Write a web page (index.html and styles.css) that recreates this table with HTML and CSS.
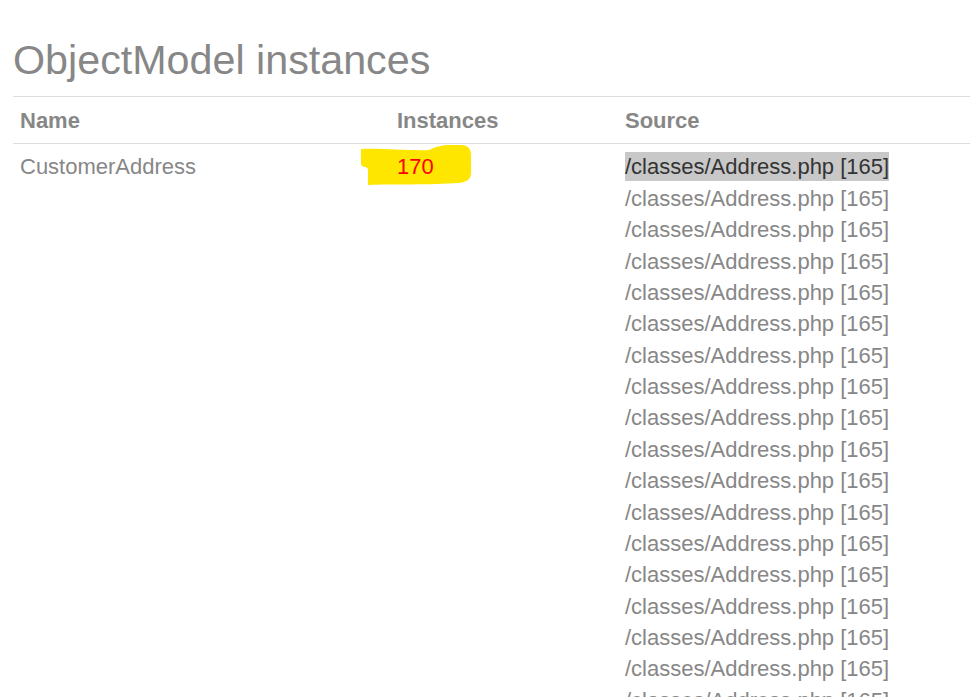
FILE: index.html
```html
<!DOCTYPE html>
<html lang="en">
<head>
<meta charset="utf-8">
<title>ObjectModel instances</title>
<link rel="stylesheet" href="styles.css">
</head>
<body>
<div class="page">
  <h1 class="title">ObjectModel instances</h1>
  <table class="grid">
    <thead>
      <tr>
        <th class="col-name">Name</th>
        <th class="col-inst">Instances</th>
        <th class="col-src">Source</th>
      </tr>
    </thead>
    <tbody>
      <tr>
        <td>CustomerAddress</td>
        <td>
          <span class="marked">
            <svg class="marker" width="110" height="40" viewBox="0 0 110 40" aria-hidden="true">
              <path d="M0,4 C20,3 50,6 68,5 C74,2 80,0 90,0 L100,0 C107,0 110,4 110,10 L110,28 C110,34 106,37 98,38 C70,40 30,39 7,40 L7,24 L5,22 L3,22 L0,20 Z" fill="#ffe600"/>
            </svg>
            <span class="count">170</span>
          </span>
        </td>
        <td>
          <div class="src"><span class="sel">/classes/Address.php [165]</span></div>
          <div class="src">/classes/Address.php [165]</div>
          <div class="src">/classes/Address.php [165]</div>
          <div class="src">/classes/Address.php [165]</div>
          <div class="src">/classes/Address.php [165]</div>
          <div class="src">/classes/Address.php [165]</div>
          <div class="src">/classes/Address.php [165]</div>
          <div class="src">/classes/Address.php [165]</div>
          <div class="src">/classes/Address.php [165]</div>
          <div class="src">/classes/Address.php [165]</div>
          <div class="src">/classes/Address.php [165]</div>
          <div class="src">/classes/Address.php [165]</div>
          <div class="src">/classes/Address.php [165]</div>
          <div class="src">/classes/Address.php [165]</div>
          <div class="src">/classes/Address.php [165]</div>
          <div class="src">/classes/Address.php [165]</div>
          <div class="src">/classes/Address.php [165]</div>
          <div class="src">/classes/Address.php [165]</div>
          <div class="src">/classes/Address.php [165]</div>
          <div class="src">/classes/Address.php [165]</div>
        </td>
      </tr>
    </tbody>
  </table>
</div>
</body>
</html>
```

FILE: styles.css
```css
html {
  overflow: hidden;
}

body {
  margin: 0;
  background: #ffffff;
  font-family: "Liberation Sans", Arial, sans-serif;
  font-size: 22px;
  line-height: 31.375px;
  color: #878787;
}

.page {
  padding-left: 13px;
}

.title {
  margin: 38px 0 13px 0;
  font-size: 41.25px;
  line-height: 45px;
  font-weight: normal;
  color: #878787;
}

.grid {
  width: 100%;
  border-collapse: collapse;
}

.grid th {
  text-align: left;
  font-weight: bold;
  padding: 7.5px 7px;
  border-top: 1px solid #dddddd;
  border-bottom: 1px solid #dddddd;
  color: #878787;
}

.col-name {
  width: 363px;
}

.col-inst {
  width: 214px;
}

.grid td {
  vertical-align: top;
  padding: 7px 7px;
}

.marked {
  position: relative;
  display: inline-block;
}

.marker {
  position: absolute;
  left: -36px;
  top: -6px;
  display: block;
}

.count {
  position: relative;
  color: #ff0000;
}

.src {
  white-space: nowrap;
}

.sel {
  background: #c8c8c8;
  color: #333333;
  padding: 2px 0;
}
```
